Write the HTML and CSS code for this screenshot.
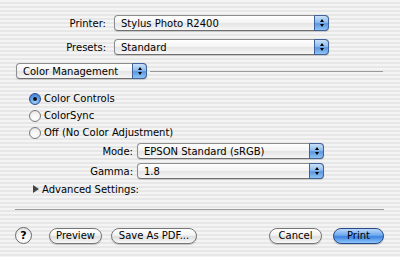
FILE: index.html
```html
<!DOCTYPE html>
<html>
<head>
<meta charset="utf-8">
<link rel="stylesheet" href="styles.css">
</head>
<body>
<div class="sheet">
  <div class="form top">
    <div class="label">Printer:</div>
    <div class="popup"><span class="ptext">Stylus Photo R2400</span><span class="arrows"><i class="up"></i><i class="down"></i></span></div>
    <div class="label">Presets:</div>
    <div class="popup"><span class="ptext">Standard</span><span class="arrows"><i class="up"></i><i class="down"></i></span></div>
  </div>
  <div class="pane-row">
    <div class="popup pane"><span class="ptext">Color Management</span><span class="arrows"><i class="up"></i><i class="down"></i></span></div>
    <div class="hline"></div>
  </div>
  <div class="radios">
    <div class="radio-row"><span class="radio on"><span class="dot"></span></span><span>Color Controls</span></div>
    <div class="radio-row"><span class="radio"></span><span>ColorSync</span></div>
    <div class="radio-row"><span class="radio"></span><span>Off (No Color Adjustment)</span></div>
  </div>
  <div class="form sub">
    <div class="label">Mode:</div>
    <div class="popup"><span class="ptext">EPSON Standard (sRGB)</span><span class="arrows"><i class="up"></i><i class="down"></i></span></div>
    <div class="label">Gamma:</div>
    <div class="popup"><span class="ptext">1.8</span><span class="arrows"><i class="up"></i><i class="down"></i></span></div>
  </div>
  <div class="advanced"><span class="tri"></span><span>Advanced Settings:</span></div>
  <div class="sep"></div>
  <div class="buttons">
    <div class="help">?</div>
    <div class="btn preview">Preview</div>
    <div class="btn savepdf">Save As PDF...</div>
    <div class="spacer"></div>
    <div class="btn cancel">Cancel</div>
    <div class="btn print">Print</div>
  </div>
</div>
</body>
</html>
```

FILE: styles.css
```css
html, body {
  margin: 0;
  padding: 0;
}
body {
  width: 400px;
  height: 257px;
  overflow: hidden;
  font-family: "DejaVu Sans", "Liberation Sans", sans-serif;
  font-size: 10px;
  color: #000;
  background: repeating-linear-gradient(to bottom, #f4f4f4 0px, #f4f4f4 2px, #e7e7e7 2px, #e7e7e7 4px);
}
.sheet {
  display: flex;
  flex-direction: column;
  padding-top: 15px;
}
.form {
  display: grid;
  align-items: center;
  column-gap: 8px;
  row-gap: 8px;
}
.top {
  grid-template-columns: 106px 215px;
}
.sub {
  grid-template-columns: 133px 187px;
  column-gap: 4px;
  row-gap: 4px;
  margin-top: 2px;
}
.label {
  text-align: right;
}
.popup {
  position: relative;
  height: 16px;
  box-sizing: border-box;
  border: 1px solid #8c8c8c;
  border-bottom-color: #6e6e6e;
  border-radius: 4px;
  background: linear-gradient(to bottom, #ffffff 0%, #f2f2f2 50%, #e4e4e4 51%, #f6f6f6 100%);
  display: flex;
  align-items: center;
  box-shadow: 0 1px 1px rgba(0,0,0,0.15);
}
.ptext {
  flex: 1;
  padding-left: 6px;
  white-space: nowrap;
  overflow: hidden;
}
.arrows {
  width: 15px;
  height: 16px;
  margin: -1px -1px -1px 0;
  box-sizing: border-box;
  border: 1px solid #40629a;
  border-radius: 0 4px 4px 0;
  background: linear-gradient(to bottom, #c9e1f8 0%, #8fbcec 45%, #5b97e0 55%, #8fc4f4 100%);
  display: flex;
  flex-direction: column;
  align-items: center;
  justify-content: center;
  gap: 2px;
}
.arrows i {
  display: block;
  width: 0;
  height: 0;
  border-left: 2.5px solid transparent;
  border-right: 2.5px solid transparent;
}
.arrows .up {
  border-bottom: 3px solid #000;
}
.arrows .down {
  border-top: 3px solid #000;
}
.pane-row {
  display: flex;
  align-items: center;
  margin-top: 8px;
  padding-left: 16px;
  padding-right: 17px;
}
.pane {
  width: 131px;
}
.hline {
  flex: 1;
  height: 1px;
  background: #9a9a9a;
  margin-left: 3px;
}
.radios {
  display: flex;
  flex-direction: column;
  padding-left: 29px;
  margin-top: 11px;
}
.radio-row {
  display: flex;
  align-items: center;
  height: 17px;
  gap: 3px;
}
.radio {
  width: 12px;
  height: 12px;
  box-sizing: border-box;
  border-radius: 50%;
  border: 1px solid #7a7a7a;
  background: radial-gradient(circle at 50% 70%, #ffffff 0%, #f0f0f0 60%, #d8d8d8 100%);
  display: flex;
  align-items: center;
  justify-content: center;
}
.radio.on {
  border-color: #2d4f8f;
  background: radial-gradient(circle at 50% 75%, #a8d2fb 0%, #5d9be4 55%, #2f6fd0 100%);
}
.dot {
  width: 4px;
  height: 4px;
  border-radius: 50%;
  background: #111;
}
.advanced {
  display: flex;
  align-items: center;
  gap: 3px;
  padding-left: 33px;
  margin-top: 4px;
  height: 12px;
}
.tri {
  width: 0;
  height: 0;
  border-top: 4px solid transparent;
  border-bottom: 4px solid transparent;
  border-left: 6px solid #444;
}
.sep {
  height: 1px;
  background: #9a9a9a;
  margin: 14px 16px 0 15px;
}
.buttons {
  display: flex;
  align-items: center;
  margin-top: 17px;
  padding-left: 15px;
  padding-right: 16px;
}
.help {
  width: 17px;
  height: 17px;
  box-sizing: border-box;
  border-radius: 50%;
  border: 1px solid #6a6a6a;
  background: radial-gradient(circle at 50% 75%, #ffffff 0%, #f0f0f0 60%, #d6d6d6 100%);
  display: flex;
  align-items: center;
  justify-content: center;
  font-weight: bold;
  font-size: 11px;
}
.btn {
  height: 16px;
  box-sizing: border-box;
  border: 1px solid #767676;
  border-radius: 8px;
  background: linear-gradient(to bottom, #ffffff 0%, #f2f2f2 45%, #dedede 55%, #f8f8f8 100%);
  display: flex;
  align-items: center;
  justify-content: center;
  white-space: nowrap;
  box-shadow: 0 1px 1px rgba(0,0,0,0.2);
}
.preview {
  width: 53px;
  margin-left: 17px;
}
.savepdf {
  width: 86px;
  margin-left: 9px;
}
.spacer {
  flex: 1;
}
.cancel {
  width: 53px;
}
.print {
  width: 51px;
  margin-left: 11px;
  border-color: #28488a;
  background: linear-gradient(to bottom, #b8d8fa 0%, #6ea8ec 45%, #3c82e0 55%, #8cc6fa 100%);
}
```
